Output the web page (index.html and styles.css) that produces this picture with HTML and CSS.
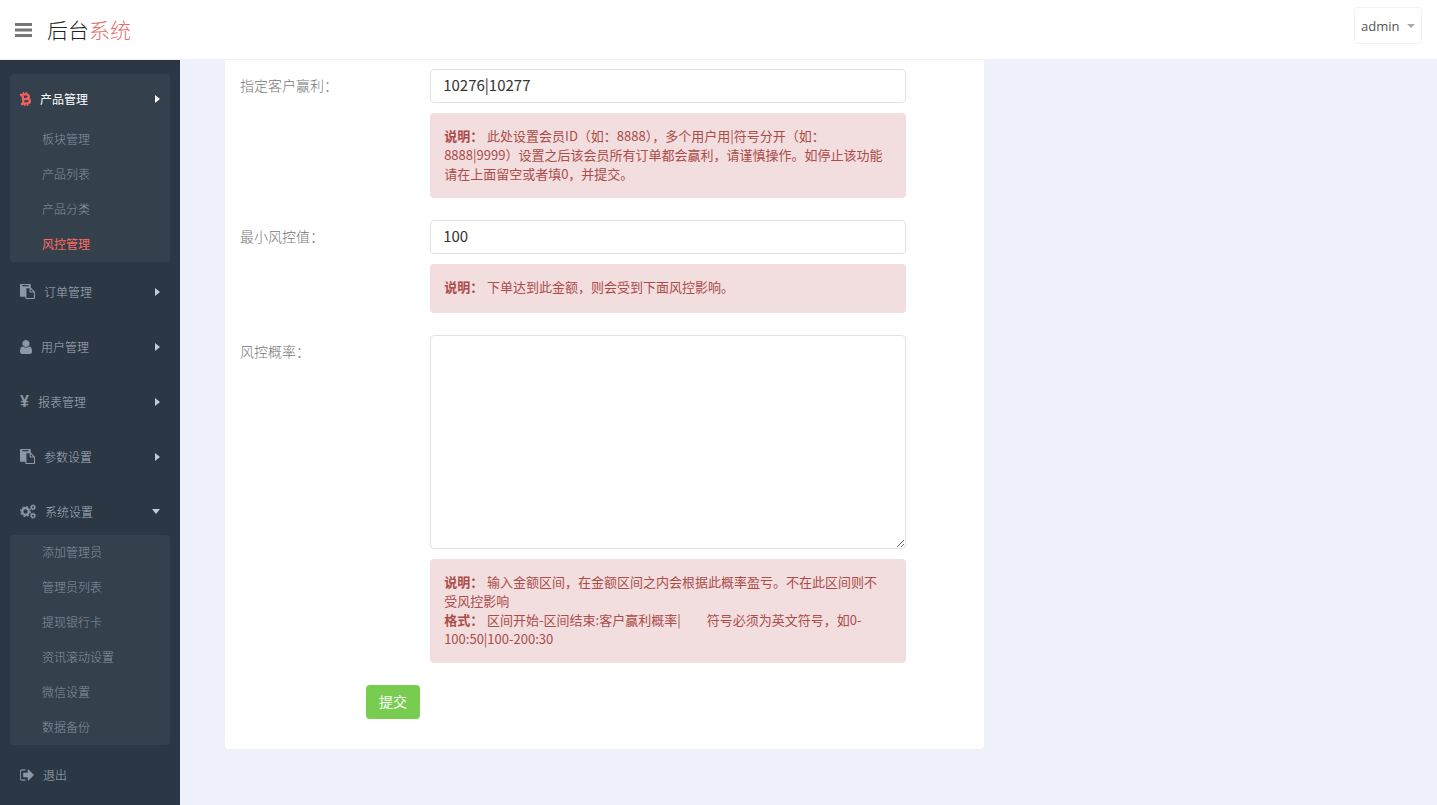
FILE: index.html
```html
<!DOCTYPE html>
<html lang="zh-CN">
<head>
  <meta charset="UTF-8">
  <title>后台系统</title>
  <link rel="stylesheet" href="styles.css">
</head>
<body>
  <svg class="sprite" aria-hidden="true">
    <symbol id="i-paste" viewBox="0 0 1792 1792"><path d="M768 1664h896v-640h-416q-40 0-68-28t-28-68v-416h-384v1152zm256-1440v-64q0-13-9.500-22.500t-22.500-9.500h-704q-13 0-22.500 9.500t-9.500 22.500v64q0 13 9.500 22.500t22.500 9.500h704q13 0 22.500-9.500t9.500-22.500zm256 672h299l-299-299v299zm512 128v672q0 40-28 68t-68 28h-960q-40 0-68-28t-28-68v-160h-544q-40 0-68-28t-28-68v-1344q0-40 28-68t68-28h1088q40 0 68 28t28 68v328q21 13 36 28l408 408q28 28 48 76t20 88z"/></symbol>
  </svg>

  <header class="header">
    <button class="toggle" type="button" aria-label="菜单">
      <svg width="17" height="14" viewBox="0 0 17 14"><path d="M0 0h17v3H0zM0 5.500h17v3H0zM0 11h17v3H0z"/></svg>
    </button>
    <a class="logo" href="#">后台<span>系统</span></a>
    <button class="user" type="button">admin <span class="caret down"></span></button>
  </header>

  <div class="container">
    <nav class="sidebar">
      <ul class="menu">
        <li class="open active">
          <a href="#">
            <svg width="11" height="14" viewBox="0 0 11 14"><g fill="none" stroke="currentColor" stroke-width="2.300" transform="rotate(-6 5.500 7)"><path d="M.5 2.500h5.500q3 0 3 2.200T6 7H3M.5 11.500h6q3.200 0 3.200-2.300T6 7M3 2v10"/><path d="M4 0v2M7 0v2M4 12v2M7 12v2" stroke-width="1.500"/></g></svg>
            产品管理<span class="caret right"></span>
          </a>
          <ul class="sub">
            <li><a href="#">板块管理</a></li>
            <li><a href="#">产品列表</a></li>
            <li><a href="#">产品分类</a></li>
            <li><a class="current" href="#">风控管理</a></li>
          </ul>
        </li>
        <li>
          <a href="#"><svg width="15" height="15"><use href="#i-paste"/></svg>订单管理<span class="caret right"></span></a>
        </li>
        <li>
          <a href="#"><svg width="12" height="14" viewBox="256 128 1280 1536" preserveAspectRatio="none"><path d="M1536 1399q0 109-62.500 187t-150.500 78h-854q-88 0-150.500-78t-62.500-187q0-85 8.500-160.500t31.500-152 58.500-131 94-89 134.500-34.500q131 128 313 128t313-128q76 0 134.500 34.500t94 89 58.500 131 31.500 152 8.500 160.500zm-256-887q0 159-112.500 271.500t-271.500 112.500-271.500-112.500-112.500-271.500 112.500-271.500 271.500-112.500 271.500 112.500 112.500 271.500z"/></svg>用户管理<span class="caret right"></span></a>
        </li>
        <li>
          <a href="#"><span class="yen">¥</span>报表管理<span class="caret right"></span></a>
        </li>
        <li>
          <a href="#"><svg width="15" height="15"><use href="#i-paste"/></svg>参数设置<span class="caret right"></span></a>
        </li>
        <li class="open">
          <a href="#">
            <svg width="16" height="15" viewBox="0 0 16 15"><g fill="none" stroke="currentColor"><circle cx="5.500" cy="7.500" r="3.300" stroke-width="2.200"/><circle cx="5.500" cy="7.500" r="4.900" stroke-width="1.200" stroke-dasharray="2 1.850"/><circle cx="13" cy="3.300" r="1.700" stroke-width="1.400"/><circle cx="13" cy="3.300" r="2.600" stroke-width=".8" stroke-dasharray="1.100 .94"/><circle cx="13" cy="11.700" r="1.700" stroke-width="1.400"/><circle cx="13" cy="11.700" r="2.600" stroke-width=".8" stroke-dasharray="1.100 .94"/></g></svg>
            系统设置<span class="caret down"></span>
          </a>
          <ul class="sub">
            <li><a href="#">添加管理员</a></li>
            <li><a href="#">管理员列表</a></li>
            <li><a href="#">提现银行卡</a></li>
            <li><a href="#">资讯滚动设置</a></li>
            <li><a href="#">微信设置</a></li>
            <li><a href="#">数据备份</a></li>
          </ul>
        </li>
        <li>
          <a href="#"><svg width="14" height="14" viewBox="96 128 1568 1536"><path d="M704 1440q0 4 1 20t.5 26.500-3 23.500-10 19.500-20.500 6.500h-320q-119 0-203.500-84.500t-84.500-203.500v-704q0-119 84.500-203.500t203.500-84.500h320q13 0 22.500 9.500t9.500 22.500q0 4 1 20t.5 26.500-3 23.500-10 19.500-20.500 6.500h-320q-66 0-113 47t-47 113v704q0 66 47 113t113 47h312l11.500 1 11.500 3 8 5.500 7 9 2 13.500zm928-544q0 26-19 45l-544 544q-19 19-45 19t-45-19-19-45v-288h-448q-26 0-45-19t-19-45v-384q0-26 19-45t45-19h448v-288q0-26 19-45t45-19 45 19l544 544q19 19 19 45z"/></svg>退出</a>
        </li>
      </ul>
    </nav>

    <main class="main">
      <form class="panel">
        <div class="form-row">
          <label for="winIds">指定客户赢利：</label>
          <div class="field">
            <input id="winIds" type="text" value="10276|10277">
            <div class="note">
              <strong>说明：</strong> 此处设置会员ID（如：8888），多个用户用|符号分开（如：8888|9999）设置之后该会员所有订单都会赢利，请谨慎操作。如停止该功能请在上面留空或者填0，并提交。
            </div>
          </div>
        </div>
        <div class="form-row">
          <label for="minRisk">最小风控值：</label>
          <div class="field">
            <input id="minRisk" type="text" value="100">
            <div class="note"><strong>说明：</strong> 下单达到此金额，则会受到下面风控影响。</div>
          </div>
        </div>
        <div class="form-row">
          <label for="riskRate">风控概率：</label>
          <div class="field">
            <textarea id="riskRate" rows="10"></textarea>
            <div class="note">
              <strong>说明：</strong> 输入金额区间，在金额区间之内会根据此概率盈亏。不在此区间则不受风控影响<br>
              <strong>格式：</strong> 区间开始-区间结束:客户赢利概率|&emsp;&emsp;符号必须为英文符号，如0-100:50|100-200:30
            </div>
          </div>
        </div>
        <button class="submit" type="submit">提交</button>
      </form>
    </main>
  </div>
</body>
</html>
```
FILE: styles.css
```css
* { box-sizing: border-box; }
body { margin: 0; min-height: 100vh; display: flex; flex-direction: column; font-family: "Noto Sans CJK SC", sans-serif; font-size: 13px; color: #797979; background: #eef1f9; }
ul { list-style: none; margin: 0; padding: 0; }
a { text-decoration: none; color: inherit; }
button, input, textarea { font-family: inherit; }
svg { fill: currentColor; flex: none; }
.sprite { display: none; }

/* header */
.header { display: flex; align-items: center; height: 60px; padding: 0 15px; background: #fff; border-bottom: 1px solid #f1f2f7; }
.toggle { display: flex; padding: 0; border: 0; background: none; color: #777; cursor: pointer; }
.logo { margin-left: 15px; padding-bottom: 2px; font-size: 21px; font-weight: 300; color: #222; }
.logo span { color: #e0726c; }
.user { display: flex; align-items: center; justify-content: space-between; width: 68px; height: 37px; margin: 7px 0 auto auto; padding: 0 6px; background: #fff; border: 1px solid #f3f3f3; border-radius: 4px; font-family: "Open Sans", sans-serif; font-size: 13px; color: #555; cursor: pointer; }

.caret { width: 0; height: 0; border: 4px solid transparent; }
.caret.down { border-top: 5px solid; border-bottom: 0; }
.caret.right { border-left: 5px solid; border-right: 0; }
.user .caret { border-top-width: 4px; color: #aaa; }

/* sidebar */
.container { flex: 1; display: flex; }
.sidebar { flex: none; width: 180px; padding: 14px 10px 0; background: #2b3744; font-size: 12px; font-weight: 300; color: #a9b3be; }
.menu > li { margin-bottom: 10px; }
.menu > li.open { margin-bottom: 8px; }
.menu > li > a { display: flex; align-items: center; gap: 9px; height: 45px; padding: 0 10px 2px; }
.menu .caret { margin-left: auto; color: #c3cbd3; }
.menu > .active { padding-top: 3px; background: #35404d; border-radius: 4px; }
.active > a { color: #fff; font-weight: 400; }
.active .caret { color: #fff; }
.yen { font-family: "Liberation Sans", sans-serif; font-size: 16px; font-weight: bold; color: #8d98a4; }
.menu svg { color: #8d98a4; }
.menu .active > a svg { color: #f0625f; }
.sub { background: #35404d; border-radius: 4px; }
.sub a { display: block; height: 35px; padding-left: 32px; line-height: 33px; color: #8a94a0; }
.sub a.current { color: #ff6c60; font-weight: 400; }

/* form */
.main { flex: 1; padding: 0 45px 40px; }
.panel { width: 65%; padding: 9px 78px 30px 15px; background: #fff; border-radius: 0 0 4px 4px; }
.form-row { display: grid; grid-template-columns: 2fr 5fr; margin-bottom: 22px; }
.form-row label { font-size: 14px; font-weight: 300; line-height: 32px; color: #777; }
.field { min-width: 0; }
.field input, .field textarea { display: block; width: 100%; padding: 6px 12px; border: 1px solid #e2e2e4; border-radius: 4px; background: #fff; font-size: 15px; line-height: 20px; color: #333; }
.field input { height: 34px; padding: 4px 12px 8px; }
.note { min-height: 49px; margin-top: 10px; padding: 13px 18px 15px 14px; background: #f2dede; border-radius: 4px; line-height: 19px; color: #ab4c4a; }
.note strong { margin-right: 1px; }
.submit { display: block; height: 34px; margin-left: 126px; padding: 0 13px 2px; border: 0; border-radius: 4px; background: #78cd51; font-size: 14px; color: #fff; cursor: pointer; }
```
